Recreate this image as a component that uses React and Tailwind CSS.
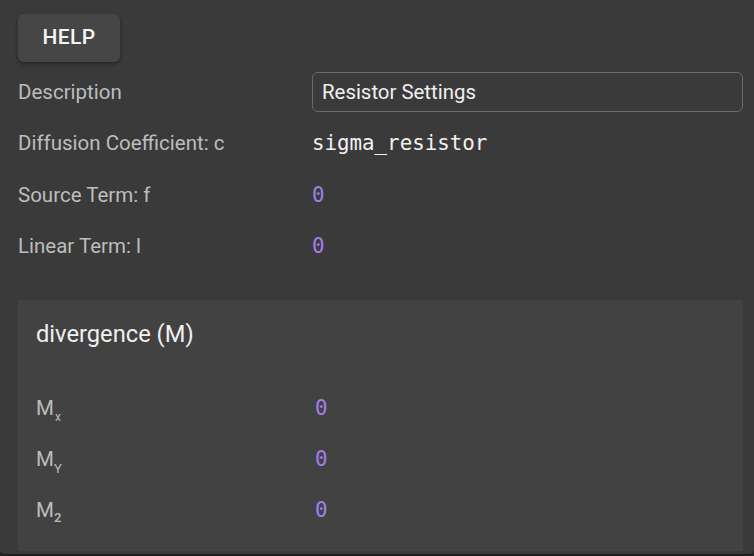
import React from "react";

const LABEL = "text-[20.5px] text-[#bdbdbd]";
const MONO = { fontFamily: '"DejaVu Sans Mono", monospace' };

const Row = ({ label, children, first = false }) => (
  <div className={`grid grid-cols-[294px_1fr] items-center ${first ? "h-[40px]" : "h-[51px]"}`}>
    <span className={LABEL}>{label}</span>
    <div className="min-w-0">{children}</div>
  </div>
);

const Zero = () => (
  <span className="text-[20.8px] text-[#a07fe9]" style={MONO}>
    0
  </span>
);

const MRow = ({ sub, subClass }) => (
  <div className="grid grid-cols-[279px_1fr] items-center h-[51px]">
    <span className={LABEL}>
      M<span className={subClass}>{sub}</span>
    </span>
    <Zero />
  </div>
);

export default function App() {
  return (
    <div className="w-[754px] h-[556px] bg-[#2a2a2a] overflow-hidden" style={{ fontFamily: 'Roboto, "Liberation Sans", sans-serif' }}>
      <div className="h-[554px] bg-[#3a3a3a] rounded-b-[4px] shadow-[0_1px_3px_rgba(0,0,0,0.5)] pt-[14px] pl-[18px] pr-[11px] flex flex-col">
        <button className="w-[102px] h-[48px] rounded-[6px] bg-[#464646] text-[#f5f5f5] text-[21px] font-medium tracking-[0.4px] shadow-[0_2px_4px_rgba(0,0,0,0.35)]">
          HELP
        </button>

        <div className="mt-[10px] flex flex-col">
          <Row label="Description" first>
            <div className="h-[40px] border border-[#6b6b6b] rounded-[6px] flex items-center px-[9px] text-[20.4px] text-[#f0f0f0]">
              Resistor Settings
            </div>
          </Row>
          <div className="mt-[6px] flex flex-col">
            <Row label="Diffusion Coefficient: c">
              <span className="text-[20.8px] text-[#f2f2f2]" style={MONO}>
                sigma_resistor
              </span>
            </Row>
            <div className="mt-[1px]">
              <Row label="Source Term: f">
                <Zero />
              </Row>
            </div>
            <Row label="Linear Term: l">
              <Zero />
            </Row>
          </div>
        </div>

        <div className="mt-[28px] w-[725px] h-[251px] bg-[#424242] px-[18px] pt-[20px]">
          <div className="text-[23.7px] text-[#f0f0f0] leading-[28px]">divergence (M)</div>
          <div className="mt-[35px] flex flex-col">
            <MRow sub="x" subClass="text-[12px] relative top-[6px] left-[1px]" />
            <MRow sub="Y" subClass="text-[13px] relative top-[7px]" />
            <MRow sub="2" subClass="text-[13px] relative top-[5px] font-medium" />
          </div>
        </div>
      </div>
    </div>
  );
}
